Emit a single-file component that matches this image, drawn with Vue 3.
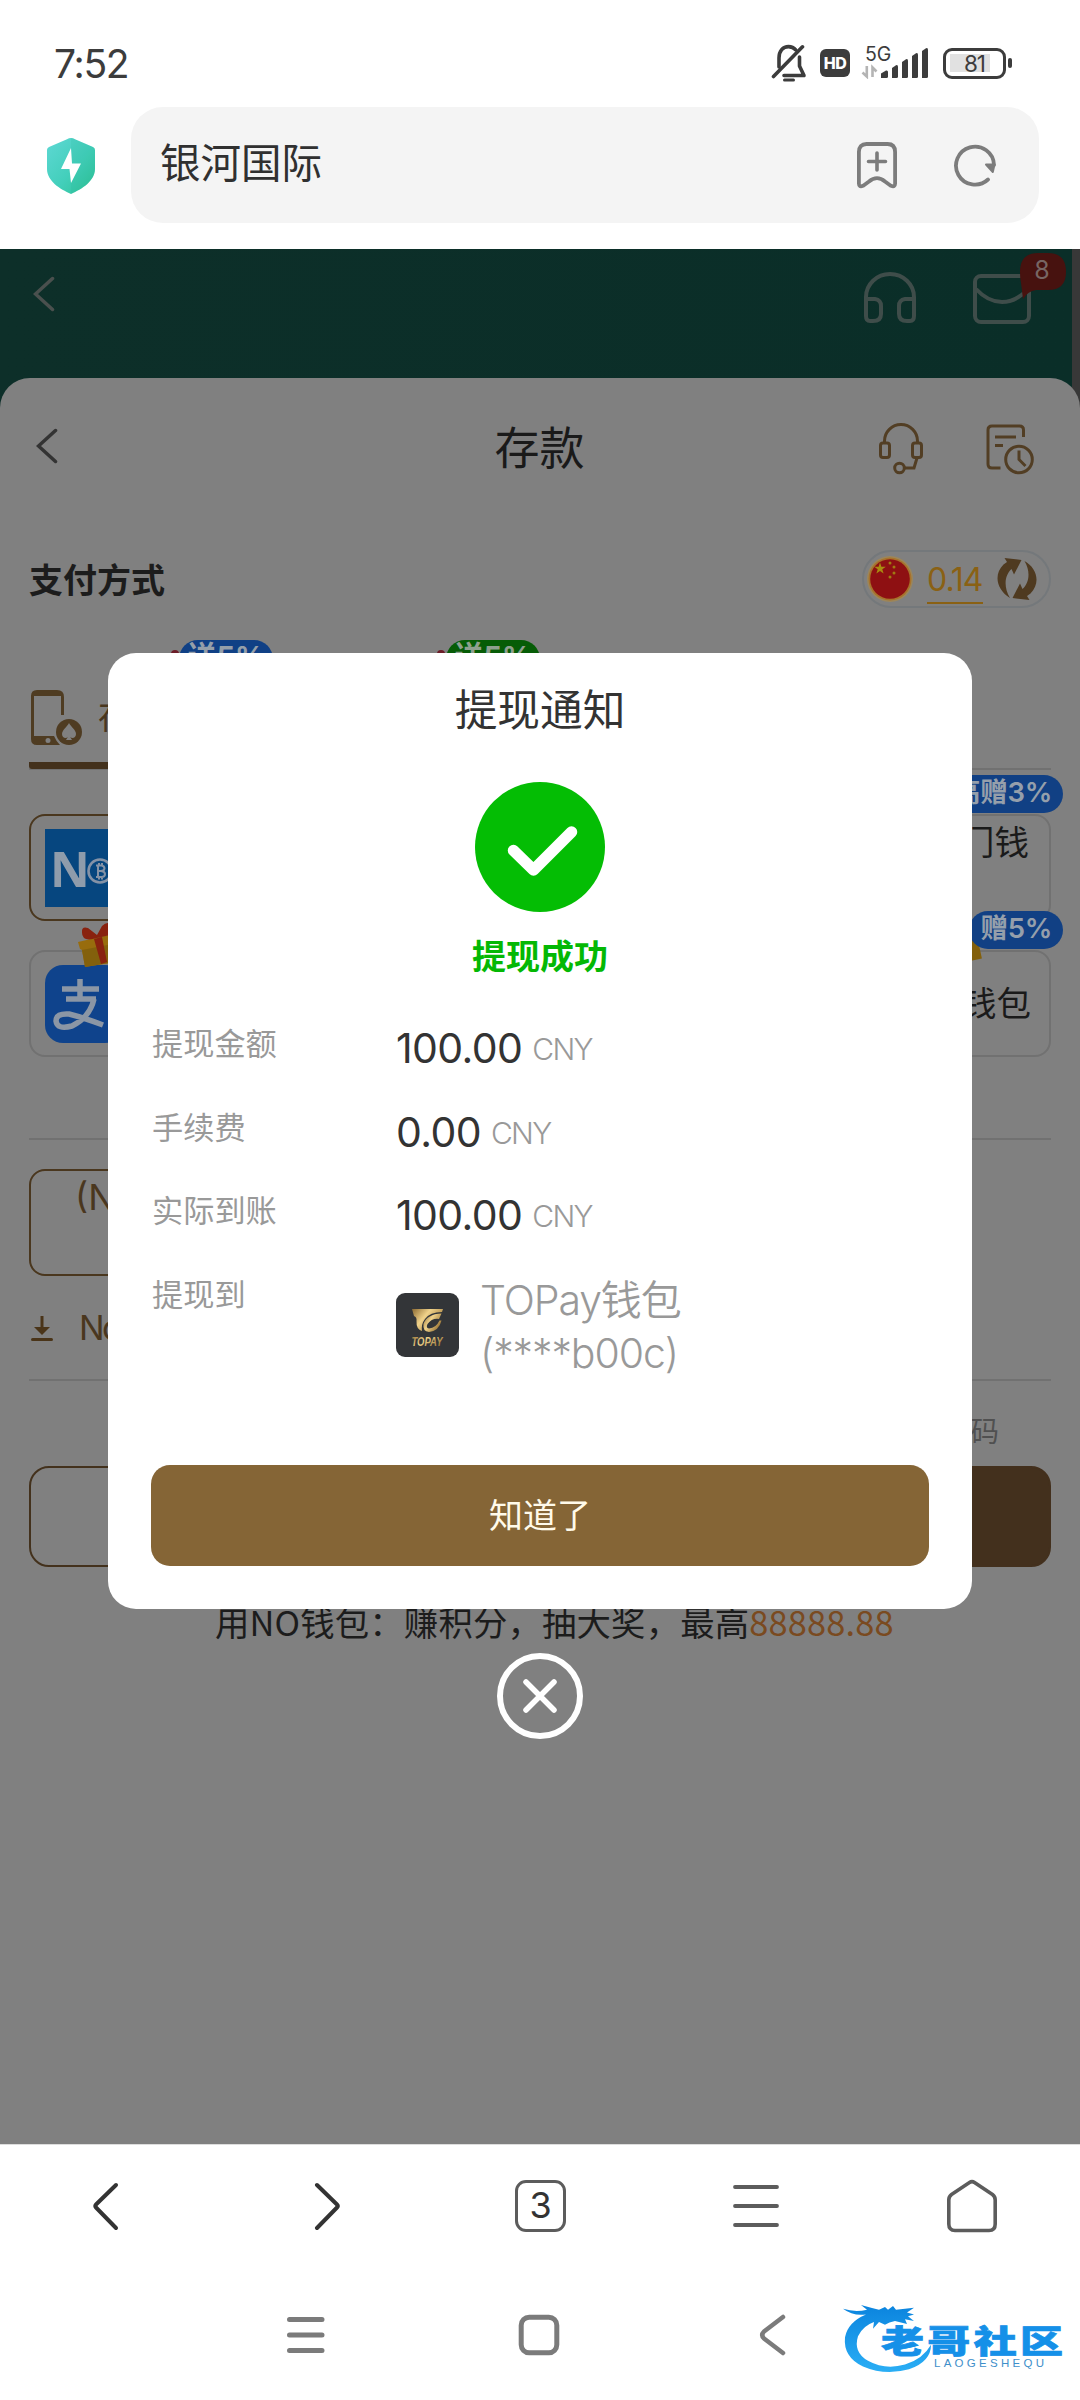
<script setup>
const rows = [
  { label: '提现金额', value: '100.00' },
  { label: '手续费', value: '0.00' },
  { label: '实际到账', value: '100.00' },
]
</script>

<template>
  <div class="screen">
    <header class="status">
      <span class="time">7:52</span>
      <div class="status-icons">
        <svg class="bell" width="36" height="40" viewBox="0 0 36 40" fill="none" stroke="#3c3c3c" stroke-width="3.6" stroke-linecap="round" stroke-linejoin="round">
          <path d="M8 24V15C8 8 12 3.6 17.500 3.600C20.500 3.600 23 4.800 24.700 6.800M28.500 14V23L33 32.500H13" />
          <path d="M2.500 33.500L31.500 3.800" />
          <path d="M13.500 37H22.500" stroke-width="3" />
        </svg>
        <span class="hd">HD</span>
        <div class="cell">
          <span class="gen">5G</span>
          <svg width="68" height="32" viewBox="0 0 68 32">
            <g fill="none" stroke="#b4b4b4" stroke-width="2.600">
              <path d="M5.800 19V29.500L1.500 25.500M11.500 30V20.500L15.500 24.500" />
            </g>
            <g fill="#3c3c3c">
              <path d="M20 31V26.500L25 23.500Q27 23 27 25V29.500Q27 31 25.500 31Z" />
              <path d="M31 31V21L35 18.200Q37 17.500 37 20V29.500Q37 31 35.500 31Z" />
              <path d="M41 31V15L45 12.300Q47 11.500 47 14V29.500Q47 31 45.500 31Z" />
              <path d="M51 31V9L55 6.300Q57 5.500 57 8V29.500Q57 31 55.500 31Z" />
              <path d="M61 31V4L65 1.300Q67 .5 67 3V29.500Q67 31 65.500 31Z" />
            </g>
          </svg>
        </div>
        <div class="battery"><i class="level"></i><span>81</span></div>
        <i class="nub"></i>
      </div>
    </header>

    <div class="address">
      <svg class="shield" width="50" height="56" viewBox="0 0 50 56">
        <defs>
          <linearGradient id="sh" x1="0" y1="0" x2="1" y2="1">
            <stop offset="0" stop-color="#5ed8d4" />
            <stop offset=".55" stop-color="#43cfbb" />
            <stop offset="1" stop-color="#2cc193" />
          </linearGradient>
        </defs>
        <path fill="url(#sh)" d="M25 0Q27 0 29 1.200L47 9Q49 10 49 12V31C49 43 36 51 25 56C14 51 1 43 1 31V12Q1 10 3 9L21 1.200Q23 0 25 0Z" />
        <path fill="#1fa98a" opacity=".12" d="M25 0Q27 0 29 1.200L47 9Q49 10 49 12V31C49 43 36 51 25 56Z" />
        <path fill="#fff" d="M25 10L15 31H23.500L25 45L35 25.500H26Z" />
      </svg>
      <div class="urlbar">
        <span>银河国际</span>
        <svg class="mark" width="42" height="48" viewBox="0 0 42 48" fill="none" stroke="#7c7c7c" stroke-width="3.800" stroke-linecap="round" stroke-linejoin="round">
          <path d="M2.900 11Q2.900 3 10.500 3H31.500Q39.100 3 39.100 11V42.500Q39.100 46.500 35 44.800Q33 43.500 29 40.500Q25 37.200 21 37.200Q17 37.200 13 40.500Q9 43.500 7 44.800Q2.900 46.500 2.900 42.500Z" />
          <path d="M21 12V29M12.500 20.500H29.500" stroke-width="3.600" />
        </svg>
        <svg width="44" height="44" viewBox="0 0 44 44" fill="none" stroke="#7c7c7c" stroke-width="3.800" stroke-linecap="round">
          <path d="M35 36.500A19 19 0 1 1 41 22" />
          <path d="M33 21.500H41.500L39.800 29Z" fill="#7c7c7c" stroke-width="2" stroke-linejoin="round" />
        </svg>
      </div>
    </div>

    <main class="page">
      <div class="site-head">
        <svg class="h-back" width="22" height="36" viewBox="0 0 22 36" fill="none" stroke="#4a504e" stroke-width="3.500" stroke-linecap="round"><path d="M19.500 2.500L2.500 18L19.500 33.500" /></svg>
        <svg class="h-phone" width="54" height="52" viewBox="0 0 54 52" fill="none" stroke="#3f4d4a" stroke-width="4">
          <path d="M3 29V25A24 23 0 0 1 51 25V29M3 27H12Q18 28 18 34V42Q18 49 10 49H7Q3 49 3 44ZM51 27H42Q36 28 36 34V42Q36 49 44 49H47Q51 49 51 44Z" />
        </svg>
        <div class="mail">
          <svg width="60" height="52" viewBox="0 0 60 52" fill="none" stroke="#3f4d4a" stroke-width="4">
            <rect x="3" y="3" width="54" height="46" rx="6" />
            <path d="M4 16Q16 29 30 29Q44 29 56 16" />
          </svg>
          <svg class="bubble" width="48" height="48" viewBox="0 0 48 48"><path fill="#47120f" d="M19 1H29Q47 1 47 20Q47 38 29 38H17Q9 39 4 47L2 31Q1 27 1 20Q1 1 19 1Z" /></svg>
          <b>8</b>
        </div>
      </div>

      <section class="sheet">
        <div class="sheet-head">
          <svg width="23" height="36" viewBox="0 0 23 36" fill="none" stroke="#333" stroke-width="3.500" stroke-linecap="round"><path d="M19.500 2.500L2.500 18L19.500 33.500" /></svg>
          <h1>存款</h1>
          <svg class="support" width="46" height="52" viewBox="0 0 46 52" fill="none" stroke="#523e24" stroke-width="3">
            <path d="M6.500 20V18A16.500 16.500 0 0 1 39.500 18V20" />
            <rect x="2.500" y="20" width="9" height="14.500" rx="2.500" />
            <rect x="34.500" y="20" width="9" height="14.500" rx="2.500" />
            <path d="M39 35L36 45H26" />
            <circle cx="21.500" cy="45" r="4.800" />
          </svg>
          <svg class="record" width="50" height="52" viewBox="0 0 50 52" fill="none" stroke="#523e24" stroke-width="3">
            <path d="M38.500 14V7Q38.500 3 34.500 3H7Q3 3 3 7V41Q3 45 7 45H15.500M10 14H31M10 22.500H18" />
            <circle cx="34" cy="36.500" r="13.300" />
            <path d="M34 27.500V36.500L40.500 43" />
          </svg>
        </div>

        <div class="pay-head">
          <h2>支付方式</h2>
          <div class="balance">
            <svg width="46" height="50" viewBox="0 0 46 50">
              <circle cx="23" cy="25" r="23" fill="#b38a3c" opacity=".55" />
              <circle cx="23" cy="25" r="21.500" fill="#a8722a" />
              <circle cx="23" cy="25" r="19.800" fill="#8e1012" />
              <path fill="#a98a10" d="M13 8.500L14.400 12.700H18.800L15.300 15.300L16.600 19.500L13 17L9.400 19.500L10.700 15.300L7.200 12.700H11.600Z" />
              <g fill="#a07a12"><circle cx="23" cy="9" r="1.500" /><circle cx="27" cy="13" r="1.500" /><circle cx="27" cy="19" r="1.500" /><circle cx="23" cy="23" r="1.500" /></g>
            </svg>
            <span>0.14</span>
            <svg class="swap" width="42" height="44" viewBox="0 0 42 44" fill="#4f3a20">
              <path d="M8.500 1L25.500 3L18 17.500L15.500 12C9 18 7 29 14 41C1 33 -3 18 7.500 7.500L11 5Z" />
              <path d="M33.500 43L16.500 41L24 26.500L26.500 32C33 26 35 15 28.500 4C41 11 45 26 34.500 36.500L31 39Z" />
            </svg>
          </div>
        </div>

        <div class="tabs">
          <i class="tip t1"></i><i class="tip t2"></i>
          <span class="tag tag-blue">送5%</span>
          <span class="tag tag-green">送5%</span>
          <div class="tab">
            <svg width="54" height="58" viewBox="0 0 54 58">
              <path fill="#4f3c22" fill-rule="evenodd" d="M7 1H27Q34 1 34 8V26H31V7H4V47H24Q26 52 30 56H7Q1 56 1 50V7Q1 1 7 1ZM18 49A2.500 2.500 0 1 0 18 54A2.500 2.500 0 1 0 18 49Z" />
              <circle cx="39" cy="43" r="13" fill="#4f3c22" />
              <path fill="#808080" d="M39 34C41 38 46 41 46 45C46 49 42 50 40.200 48L42 51H36L37.800 48C36 50 32 49 32 45C32 41 37 38 39 34Z" />
            </svg>
            <span>存款</span>
          </div>
        </div>

        <div class="methods">
          <div class="card active">
            <div class="nopay"><b>N</b><svg width="26" height="28" viewBox="0 0 26 28" fill="none" stroke="#8492a6"><circle cx="13" cy="14" r="11.500" stroke-width="2.600" /><path d="M9 8.500H14.500Q17.500 9 17.500 11.500Q17 14 14 14H11M14 14Q18 14.500 18 17Q18 20 14.500 20H9M11 8.500V20M12 6V8M15 6V8M12 20V22.500M15 20V22.500" stroke-width="2" /></svg></div>
          </div>
          <div class="card wide"><span class="bonus">最高赠3%</span><span class="name top">澳门钱</span></div>
          <div class="card">
            <div class="alipay">
              <svg width="66" height="64" viewBox="0 0 66 64" fill="none" stroke="#8b96a5" stroke-width="5.500">
                <path d="M9 16H46M13 26H43M27 6V26M41 26Q37 44 19 53Q4 57 3 48Q3 40 16 41Q32 45 50 52" />
              </svg>
            </div>
            <svg class="gift" width="54" height="46" viewBox="0 0 54 46">
              <path fill="#986c0d" d="M1 20L44 10L46 20L52 38L8 45L5 28L3 27Z" />
              <path fill="#83600c" d="M8 45L5 28L46 20L50 38Z" />
              <path fill="#89220f" d="M17 17L25 15L30 40L24 42ZM20 16Q4 21 5 9Q5 4 11 6L20 13L25 4Q31 -2 36 4L33 13Z" />
            </svg>
          </div>
          <div class="card wide"><i class="gift-edge"></i><span class="bonus short">赠5%</span><span class="name mid">钱包</span></div>
        </div>

        <hr class="line l1" />
        <div class="channel">(No</div>
        <div class="download">
          <svg width="24" height="27" viewBox="0 0 24 27" fill="#4a3418"><path d="M10.500 1H13.500V12H20L12 20L4 12H10.500Z" /><rect x="1" y="23" width="22" height="3" rx="1.500" /></svg>
          <span>No</span>
        </div>
        <hr class="line l2" />
        <div class="code">码</div>
        <div class="actions"><div class="ghost"></div><div class="solid"></div></div>
        <p class="promo">用NO钱包：赚积分，抽大奖，最高<em>88888.88</em></p>
      </section>

      <div class="overlay">
        <div class="dialog">
          <h3>提现通知</h3>
          <svg class="ok" width="130" height="130" viewBox="0 0 130 130">
            <circle cx="65" cy="65" r="65" fill="#04bd04" />
            <path d="M38.500 68.500L58.500 88L96.500 50" fill="none" stroke="#fff" stroke-width="11.500" stroke-linecap="round" stroke-linejoin="round" />
          </svg>
          <p class="success">提现成功</p>
          <div v-for="r in rows" :key="r.label" class="row">
            <span class="label">{{ r.label }}</span>
            <span class="value">{{ r.value }}<small>CNY</small></span>
          </div>
          <div class="row target">
            <span class="label">提现到</span>
            <svg class="topay" width="63" height="64" viewBox="0 0 63 64">
              <defs>
                <linearGradient id="gold" x1="0" y1="0" x2="1" y2=".6">
                  <stop offset="0" stop-color="#8c6a32" /><stop offset=".45" stop-color="#f0d28a" /><stop offset="1" stop-color="#9a7434" />
                </linearGradient>
              </defs>
              <rect width="63" height="64" rx="9" fill="#333538" />
              <path fill="url(#gold)" d="M16 16H47L46 19Q34 19 29 26Q25 31 26 38Q20 36 20.500 28Q21 24 18 23Z" />
              <path fill="url(#gold)" d="M45.500 20.500L43 26Q36 25 31.500 31Q29.500 35 33 35.500Q40 35 43.500 27.500H45.500Q43 38 33 39Q26.500 38.500 27.500 31Q31 21 45.500 20.500Z" />
              <text x="31" y="53" text-anchor="middle" fill="url(#gold)" font-family="Liberation Sans, sans-serif" font-style="italic" font-weight="700" font-size="12.500" textLength="31" lengthAdjust="spacingAndGlyphs">TOPAY</text>
            </svg>
            <span class="wallet">TOPay钱包<br />(****b00c)</span>
          </div>
          <button>知道了</button>
        </div>
        <svg class="close" width="86" height="86" viewBox="0 0 86 86" fill="none" stroke="#fff" stroke-linecap="round">
          <circle cx="43" cy="43" r="40" stroke-width="6" />
          <path d="M29 29L57 57M57 29L29 57" stroke-width="5.500" />
        </svg>
      </div>
    </main>

    <nav class="browser">
      <svg width="28" height="52" viewBox="0 0 28 52" fill="none" stroke="#333" stroke-width="4" stroke-linecap="round" stroke-linejoin="round"><path d="M24 5L4 24.500Q2.500 26 4 27.500L24 48" /></svg>
      <svg width="28" height="52" viewBox="0 0 28 52" fill="none" stroke="#333" stroke-width="4" stroke-linecap="round" stroke-linejoin="round"><path d="M4 5L24 24.500Q25.500 26 24 27.500L4 48" /></svg>
      <span class="count">3</span>
      <svg width="48" height="52" viewBox="0 0 48 52" stroke="#5c5c5c" stroke-width="3.800" stroke-linecap="round"><path d="M3 7H45M3 26H45M3 45H45" /></svg>
      <svg width="52" height="54" viewBox="0 0 52 54" fill="none" stroke="#5c5c5c" stroke-width="3.600" stroke-linejoin="round"><path d="M23.500 3.500Q26 1.800 28.500 3.500L46.500 15.500Q49.200 17.500 49.200 21V45Q49.200 51.500 43 51.500H9Q2.800 51.500 2.800 45V21Q2.800 17.500 5.500 15.500Z" /></svg>
    </nav>

    <footer class="system">
      <svg width="40" height="42" viewBox="0 0 40 42" stroke="#7b7b7b" stroke-width="5" stroke-linecap="round"><path d="M3.500 5.500H36M3.500 21H36M3.500 36.500H36" /></svg>
      <svg width="42" height="42" viewBox="0 0 42 42" fill="none" stroke="#7b7b7b" stroke-width="5"><rect x="3.200" y="3.200" width="35.600" height="35.600" rx="8" /></svg>
      <svg width="28" height="44" viewBox="0 0 28 44" fill="none" stroke="#7b7b7b" stroke-width="4.500" stroke-linecap="round" stroke-linejoin="round"><path d="M24 4L5 18.500Q1.500 22 5 25.500L24 40" /></svg>
      <svg class="brand" width="230" height="84" viewBox="0 0 230 84">
        <defs><linearGradient id="dr" x1="0" y1="0" x2="0" y2="1"><stop offset="0" stop-color="#0b84de" /><stop offset="1" stop-color="#2aaef5" /></linearGradient></defs>
        <path transform="translate(0 -4.400) scale(1 .944)" fill="url(#dr)" d="M2 14Q14 18 26 15L20 10Q30 13 38 15L44 12L47 15L52 11L55 15L73 13L66 18L73 20L67 22L73 27L64 25L66 30L54 27Q48 28 44 31L38 28L32 35L33 28Q22 32 17 43Q12 60 27 69Q44 79 64 73Q82 67 90 52Q90 70 68 78Q44 85 22 75Q2 65 4 44Q7 28 25 20Q12 22 2 14Z" />
        <text transform="translate(40 53) scale(1 .74)" fill="#1590e8" stroke="#1590e8" stroke-width="1" font-family="'Noto Sans CJK SC', sans-serif" font-weight="900" font-size="43" textLength="182" lengthAdjust="spacing">老哥社区</text>
        <text x="93" y="67" fill="#3f8fca" font-family="Liberation Sans, sans-serif" font-size="11.500" textLength="110">LAOGESHEQU</text>
      </svg>
    </footer>
  </div>
</template>

<style>
body { margin: 0; background: #fff; }
</style>

<style scoped>
* { box-sizing: border-box; }
svg { display: block; flex: none; }
.screen { width: 1080px; height: 2400px; display: flex; flex-direction: column; overflow: hidden; background: #fff; font-family: Inter, "Noto Sans CJK SC", sans-serif; color: #333; }
h1, h2, h3, p { margin: 0; font-weight: 400; }

.status { height: 107px; display: flex; justify-content: space-between; padding: 43px 68px 0 54px; }
.time { font-size: 39px; line-height: 41px; color: #3c3c3c; letter-spacing: -1.300px; }
.status-icons { display: flex; height: 40px; align-items: center; }
.bell { margin-right: 13px; }
.hd { width: 30px; height: 28px; border-radius: 6px; background: #3c3c3c; color: #fff; font-size: 16px; font-weight: 800; line-height: 28px; text-align: center; margin-right: 11px; letter-spacing: -.5px; }
.cell { position: relative; width: 68px; height: 32px; margin-right: 14px; }
.gen { position: absolute; left: 4px; top: -5px; font-size: 19.500px; line-height: 24px; color: #3c3c3c; }
.battery { width: 63px; height: 31px; border: 3.500px solid #3c3c3c; border-radius: 9px; position: relative; font-size: 22.500px; letter-spacing: -1px; line-height: 25px; text-align: center; color: #3c3c3c; }
.battery span { position: relative; }
.level { position: absolute; left: 4px; top: 3px; width: 40px; height: 18px; background: #e1e1e1; }
.nub { width: 4px; height: 10px; border-radius: 2px; background: #3c3c3c; margin-left: 2px; }

.address { height: 142px; display: flex; padding: 0 41px 0 46px; }
.shield { margin-top: 31px; }
.urlbar { margin-left: 35px; width: 908px; height: 116px; border-radius: 32px; background: #f4f4f4; display: flex; align-items: center; padding: 0 42px 0 29px; font-size: 40.500px; color: #303030; }
.urlbar span { flex: 1; line-height: 50px; padding-bottom: 2px; }
.mark { margin-right: 55px; }

.page { position: relative; height: 1895px; background: linear-gradient(90deg, #0d2f29, #0a2e28 1072px, #383838 1072px); display: flex; flex-direction: column; }
.site-head { height: 129px; display: flex; padding: 0 48px 0 33px; flex: none; }
.h-back { margin-top: 27px; }
.h-phone { margin: 23px 55px 0 auto; }
.mail { position: relative; margin-top: 24px; }
.bubble { position: absolute; left: 47px; top: -21px; }
.mail b { position: absolute; left: 47px; top: -18px; width: 46px; text-align: center; font-size: 25px; line-height: 31px; font-weight: 400; color: #776664; }

.sheet { flex: 1; background: #808080; border-radius: 30px 30px 0 0; padding: 0 29px; color: #1a1a1a; }
.sheet-head { position: relative; height: 141px; display: flex; align-items: center; padding: 0 16px 6px 7px; }
.sheet-head h1 { flex: 1; text-align: center; font-size: 45px; line-height: 60px; padding: 7px 0 0 142px; }
.support { margin-right: 61px; margin-top: 7px; }
.record { margin-top: 7px; }
.pay-head { display: flex; justify-content: space-between; align-items: center; margin-top: 31px; height: 58px; }
.pay-head h2 { font-size: 34px; font-weight: 700; color: #1c1c1c; line-height: 58px; padding-top: 3px; }
.balance { width: 189px; height: 58px; border: 2px solid #74787b; border-radius: 29px; display: flex; align-items: center; padding-left: 3px; }
.balance span { margin-left: 14px; font-size: 32px; line-height: 42px; height: 45px; border-bottom: 2px solid #8a6114; color: #8a6114; letter-spacing: -1px; font-weight: 400; width: 56px; margin-top: 4px; }
.swap { margin-left: 13px; }

.tabs { position: relative; height: 130px; margin-top: 32px; border-bottom: 2px solid #717171; }
.tip { position: absolute; top: 10px; width: 8px; height: 8px; border-radius: 4px; background: #6c1d28; }
.t1 { left: 142px; }
.t2 { left: 408px; }
.tag { position: absolute; top: 0; width: 94px; height: 38px; border-radius: 19px; text-align: center; font-size: 29px; font-weight: 700; line-height: 34px; color: #959fa9; }
.tag-blue { left: 150px; background: #104085; }
.tag-green { left: 417px; background: #065c06; color: #8fa08f; }
.tab { width: 170px; height: 129px; border-bottom: 7px solid #43311c; border-radius: 0 0 3px 3px; display: flex; padding: 49px 0 0 1px; }
.tab span { margin: 7px 0 0 14px; font-size: 34px; line-height: 42px; color: #4a371e; }

.methods { margin-top: 44px; display: grid; grid-template-columns: 330px 330px; justify-content: space-between; row-gap: 29px; }
.card { position: relative; height: 107px; border: 2px solid #717171; border-radius: 16px; padding: 13px 14px; }
.card.active { border-color: #4a371e; }
.nopay { width: 120px; height: 78px; background: #06467f; display: flex; align-items: center; color: #8f9cab; padding-left: 5px; }
.nopay b { font: 700 49px/1 "Noto Sans", sans-serif; width: 37px; }
.nopay svg { margin-top: 6px; }
.alipay { width: 78px; height: 78px; border-radius: 18px; background: #0f438c; padding: 8px 0 0 8px; overflow: hidden; }
.gift { position: absolute; left: 46px; top: -30px; }
.bonus { position: absolute; right: -14px; top: -41px; height: 38px; border-radius: 19px; background: #114084; color: #959fab; font-size: 27.500px; font-weight: 600; line-height: 35px; padding: 0 11px; white-space: nowrap; letter-spacing: -.3px; }
.gift-edge { position: absolute; left: 245px; top: -21px; width: 11px; height: 29px; background: #83600c; transform: rotate(-12deg); }
.name { position: absolute; right: 20px; font-size: 34.500px; line-height: 40px; }
.name.top { top: 7px; }
.name.mid { top: 32px; right: 18px; }

.line { border: 0; height: 2px; background: #717171; margin: 0; }
.l1 { margin-top: 81px; }
.channel { margin-top: 29px; width: 330px; height: 107px; border: 2px solid #4a371e; border-radius: 16px; padding: 5px 0 0 44px; font-size: 36px; line-height: 42px; color: #4a371e; }
.download { display: flex; height: 28px; margin-top: 38px; padding-left: 1px; align-items: center; }
.download span { margin-left: 25px; font-size: 34px; line-height: 28px; color: #4a371e; letter-spacing: -2.500px; }
.l2 { margin-top: 37px; }
.code { margin-top: 31px; height: 40px; padding-right: 52px; text-align: right; font-size: 28.500px; line-height: 40px; color: #505050; }
.actions { margin-top: 14px; display: flex; justify-content: space-between; }
.ghost, .solid { width: 490px; height: 101px; border-radius: 20px; border: 2px solid #43311c; }
.solid { background: #43301d; border-color: #43301d; }
.promo { margin-top: 34px; padding-left: 186px; font: 400 34.400px/40px "Noto Sans CJK SC", sans-serif; letter-spacing: .15px; color: #1c1c1c; white-space: nowrap; }
.promo em { font-style: normal; color: #7a4a20; }

.overlay { position: absolute; left: 0; right: 0; top: 404px; display: flex; flex-direction: column; align-items: center; }
.dialog { width: 864px; height: 956px; border-radius: 28px; background: #fff; display: flex; flex-direction: column; align-items: center; }
.dialog h3 { margin-top: 33px; height: 50px; line-height: 50px; font-size: 42.700px; }
.ok { margin-top: 46px; }
.success { margin-top: 21px; height: 48px; line-height: 48px; font-size: 34px; font-weight: 700; color: #04b804; }
.row { width: 864px; height: 83.500px; display: flex; padding-left: 44px; }
.success + .row { margin-top: 41px; }
.label { width: 244px; font-size: 31.200px; line-height: 40px; color: #999; padding-top: 2px; }
.value { font-size: 41px; line-height: 40px; padding-top: 6px; color: #333; letter-spacing: -.6px; white-space: nowrap; }
.value small { position: relative; top: -3px; font-size: 30px; font-weight: 350; color: #999; margin-left: 10px; letter-spacing: -1.700px; }
.target { height: 122px; }
.topay { margin-top: 20px; }
.wallet { margin: 1px 0 0 21px; font-size: 41px; font-weight: 350; line-height: 53px; color: #999; white-space: nowrap; letter-spacing: -1.100px; }
.dialog button { margin-top: auto; margin-bottom: 43px; width: 778px; height: 101px; border: 0; border-radius: 19px; background: #856536; color: #fffaea; font: 400 34px/101px Inter, "Noto Sans CJK SC", sans-serif; padding: 0; }
.close { margin-top: 44px; }

.browser { height: 126px; padding-bottom: 3px; border-top: 1px solid #ddd; display: grid; grid-template-columns: 212px 230px 197px 233px 200px; align-items: center; justify-items: center; flex: none; }
.count { width: 51px; height: 52px; border: 3.500px solid #5c5c5c; border-radius: 11px; font-size: 36px; line-height: 45px; text-align: center; color: #333; }
.system { position: relative; display: flex; height: 130px; padding-left: 286px; align-items: center; }
.system > svg:nth-child(2) { margin-left: 192px; }
.system > svg:nth-child(3) { margin-left: 199px; }
.brand { position: absolute; left: 841px; top: 30px; }
</style>
